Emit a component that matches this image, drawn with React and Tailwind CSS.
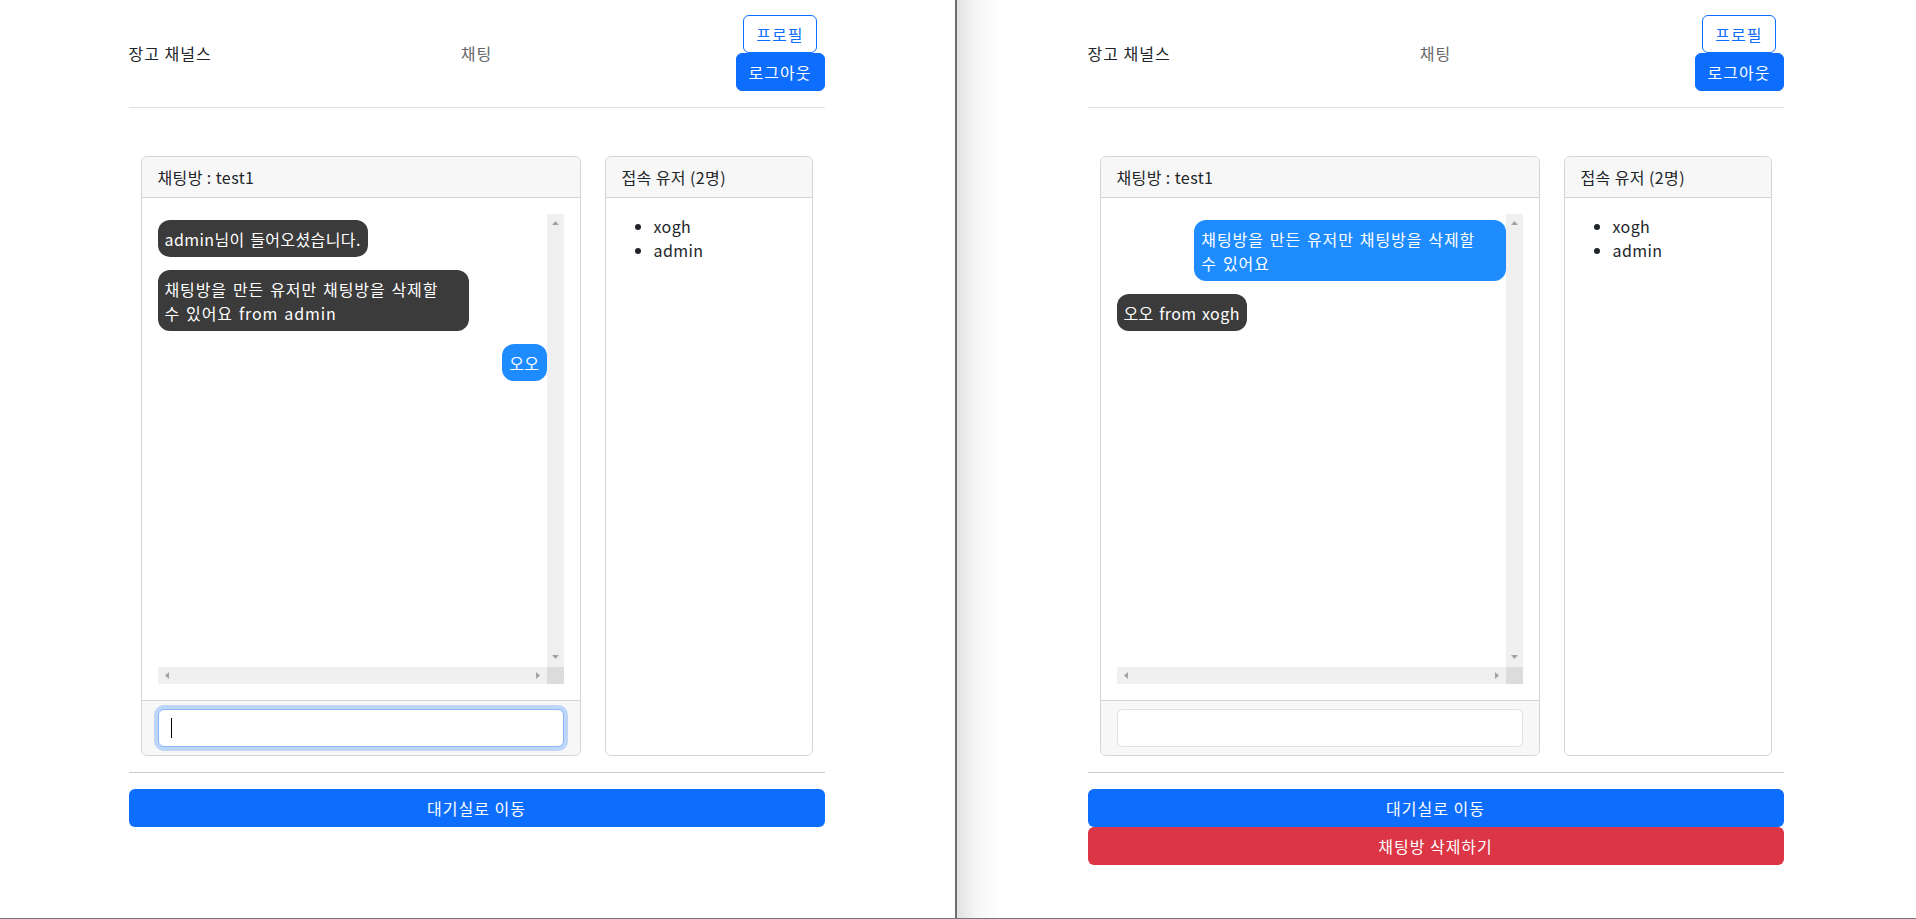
import React from 'react';

// 스크롤바 화살표 (작은 삼각형)
const Arrow = ({ dir }) => {
  const points = {
    up: '0,4 3.5,0 7,4',
    down: '0,0 7,0 3.5,4',
    left: '4,0 4,7 0,3.5',
    right: '0,0 0,7 4,3.5',
  }[dir];
  const vertical = dir === 'up' || dir === 'down';
  return (
    <svg width={vertical ? 7 : 4} height={vertical ? 4 : 7} className="block">
      <polygon points={points} fill="#a3a3a3" />
    </svg>
  );
};

// 말풍선: 줄바꿈이 있는 메시지는 최대 폭(80%)으로 고정
const Bubble = ({ mine, text }) => {
  const lines = text.split('\n');
  return (
    <div className={`flex ${mine ? 'justify-end' : 'justify-start'}`}>
      <div
        className={`${lines.length > 1 ? 'w-[80%] tracking-[0.9px]' : 'max-w-[80%]'} rounded-[12px] px-[7px] py-[6.5px] text-white [word-spacing:1.5px] ${
          mine ? 'bg-[#1e8cff]' : 'bg-[#3b3b3b]'
        }`}
      >
        {lines.map((line, i) => (
          <div key={i}>{line}</div>
        ))}
      </div>
    </div>
  );
};

const ChatWindow = ({ messages, focused, owner }) => (
  <div className="flex-1 h-full flex justify-center pr-[2px]">
    <div className="w-[720px] px-3">
      {/* 헤더 */}
      <header className="grid grid-cols-3 items-center pt-[15px] pb-4 border-b border-[#dee2e6]">
        <div className="text-[#212529] tracking-[1px]">장고 채널스</div>
        <div className="text-center text-[#666] tracking-[1px]">채팅</div>
        <div className="flex flex-col items-end tracking-[1px]">
          <button className="mr-2 h-[38px] px-3 rounded-md border border-[#0d6efd] text-[#0d6efd] bg-white">
            프로필
          </button>
          <button className="h-[38px] px-3 rounded-md border border-[#0d6efd] bg-[#0d6efd] text-white">
            로그아웃
          </button>
        </div>
      </header>

      {/* 채팅 영역 */}
      <div className="grid grid-cols-[8fr_4fr] mt-12">
        <div className="px-3">
          <div className="h-[600px] flex flex-col border border-[#d4d4d4] rounded-md overflow-hidden">
            <div className="h-[41px] px-4 flex items-center bg-[#f7f7f7] border-b border-[#d4d4d4] text-[#212529]">
              채팅방 : test1
            </div>
            <div className="flex-1 p-4 bg-white">
              <div className="h-[470px] flex flex-col">
                <div className="flex-1 flex min-h-0">
                  <div className="flex-1 flex flex-col gap-[13px] pt-[6px]">
                    {messages.map((m, i) => (
                      <Bubble key={i} mine={m.mine} text={m.text} />
                    ))}
                  </div>
                  <div className="w-[17px] bg-[#f0f0f0] flex flex-col items-center justify-between pt-[7px] pb-[8px]">
                    <Arrow dir="up" />
                    <Arrow dir="down" />
                  </div>
                </div>
                <div className="h-[17px] flex">
                  <div className="flex-1 bg-[#f0f0f0] flex items-center justify-between pl-[7px] pr-[7px]">
                    <Arrow dir="left" />
                    <Arrow dir="right" />
                  </div>
                  <div className="w-[17px] bg-[#dcdcdc]" />
                </div>
              </div>
            </div>
            <div className="h-[55px] px-4 flex items-center bg-[#f7f7f7] border-t border-[#d4d4d4]">
              <div className="relative w-full">
                <input
                  readOnly
                  className={`w-full h-[38px] px-3 rounded-md bg-white outline-none ${
                    focused
                      ? 'border border-[#86b7fe] ring-4 ring-[#0d6efd]/25'
                      : 'border border-[#dee2e6]'
                  }`}
                />
                {focused && <span className="absolute left-[13px] top-[9px] w-px h-[20px] bg-black" />}
              </div>
            </div>
          </div>
        </div>
        <div className="px-3">
          <div className="h-[600px] flex flex-col border border-[#d4d4d4] rounded-md overflow-hidden">
            <div className="h-[41px] px-4 flex items-center bg-[#f7f7f7] border-b border-[#d4d4d4] text-[#212529]">
              접속 유저 (2명)
            </div>
            <div className="flex-1 p-4 bg-white">
              <ul className="list-disc pl-8 text-[#212529]">
                <li>xogh</li>
                <li>admin</li>
              </ul>
            </div>
          </div>
        </div>
      </div>

      <hr className="mt-4 border-0 border-t border-[#c8c9ca]" />

      <div className="mt-4 flex flex-col tracking-[1px]">
        <button className="w-full h-[38px] rounded-md bg-[#0d6efd] text-white">대기실로 이동</button>
        {owner && (
          <button className="w-full h-[38px] rounded-md bg-[#dc3545] text-white">채팅방 삭제하기</button>
        )}
      </div>
    </div>
  </div>
);

export default function App() {
  const leftMessages = [
    { text: 'admin님이 들어오셨습니다.' },
    { text: '채팅방을 만든 유저만 채팅방을 삭제할\n수 있어요 from admin' },
    { text: '오오', mine: true },
  ];
  const rightMessages = [
    { text: '채팅방을 만든 유저만 채팅방을 삭제할\n수 있어요', mine: true },
    { text: '오오 from xogh' },
  ];

  return (
    <div className="w-[1916px] h-[919px] flex flex-col bg-white text-base leading-6 tracking-[0.4px] font-['Noto_Sans_CJK_KR','Noto_Sans',sans-serif] overflow-hidden">
      <div className="flex-1 flex">
        <div className="w-[955px] h-full bg-white flex">
          <ChatWindow messages={leftMessages} focused />
        </div>
        <div className="w-[2px] bg-[#6e6e6e]" />
        <div className="flex-1 h-full flex bg-[linear-gradient(90deg,#e2e2e2_0px,#f6f6f6_20px,#ffffff_45px)]">
          <ChatWindow messages={rightMessages} owner />
        </div>
      </div>
      <div className="h-px bg-[#777]" />
    </div>
  );
}
